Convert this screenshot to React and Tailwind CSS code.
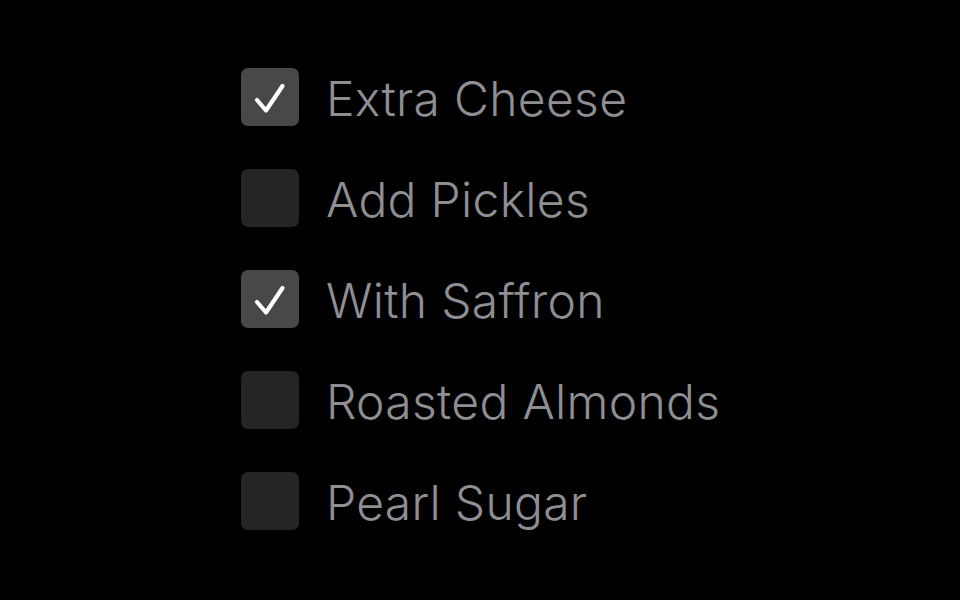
import React, { useState } from "react";

const items = [
  { label: "Extra Cheese", checked: true },
  { label: "Add Pickles", checked: false },
  { label: "With Saffron", checked: true },
  { label: "Roasted Almonds", checked: false },
  { label: "Pearl Sugar", checked: false },
];

function Check() {
  return (
    <svg width="58" height="58" viewBox="0 0 58 58" fill="none">
      <path d="M16 32 L25 42.5 L41.5 18" stroke="#ffffff" strokeWidth="4.2" strokeLinecap="round" strokeLinejoin="round" />
    </svg>
  );
}

export default function App() {
  const [state, setState] = useState(items.map((i) => i.checked));
  return (
    <div className="w-[960px] h-[600px] bg-black flex items-center pl-[241px]" style={{ fontFamily: "Inter, 'Noto Sans', sans-serif" }}>
      <div className="flex flex-col gap-[43px] mt-[-2px]">
        {items.map((it, i) => (
          <label key={it.label} className="flex items-center gap-[27px] cursor-pointer">
            <button
              type="button"
              onClick={() => setState((s) => s.map((v, j) => (j === i ? !v : v)))}
              className={`w-[58px] h-[58px] shrink-0 rounded-[7px] flex items-center justify-center ${state[i] ? "bg-[#48484a]" : "bg-[#252525]"}`}
            >
              {state[i] && <Check />}
            </button>
            <span className="text-[48px] leading-none font-[350] text-[#8e8e93] tracking-[0.3px] mt-[4px]">{it.label}</span>
          </label>
        ))}
      </div>
    </div>
  );
}
